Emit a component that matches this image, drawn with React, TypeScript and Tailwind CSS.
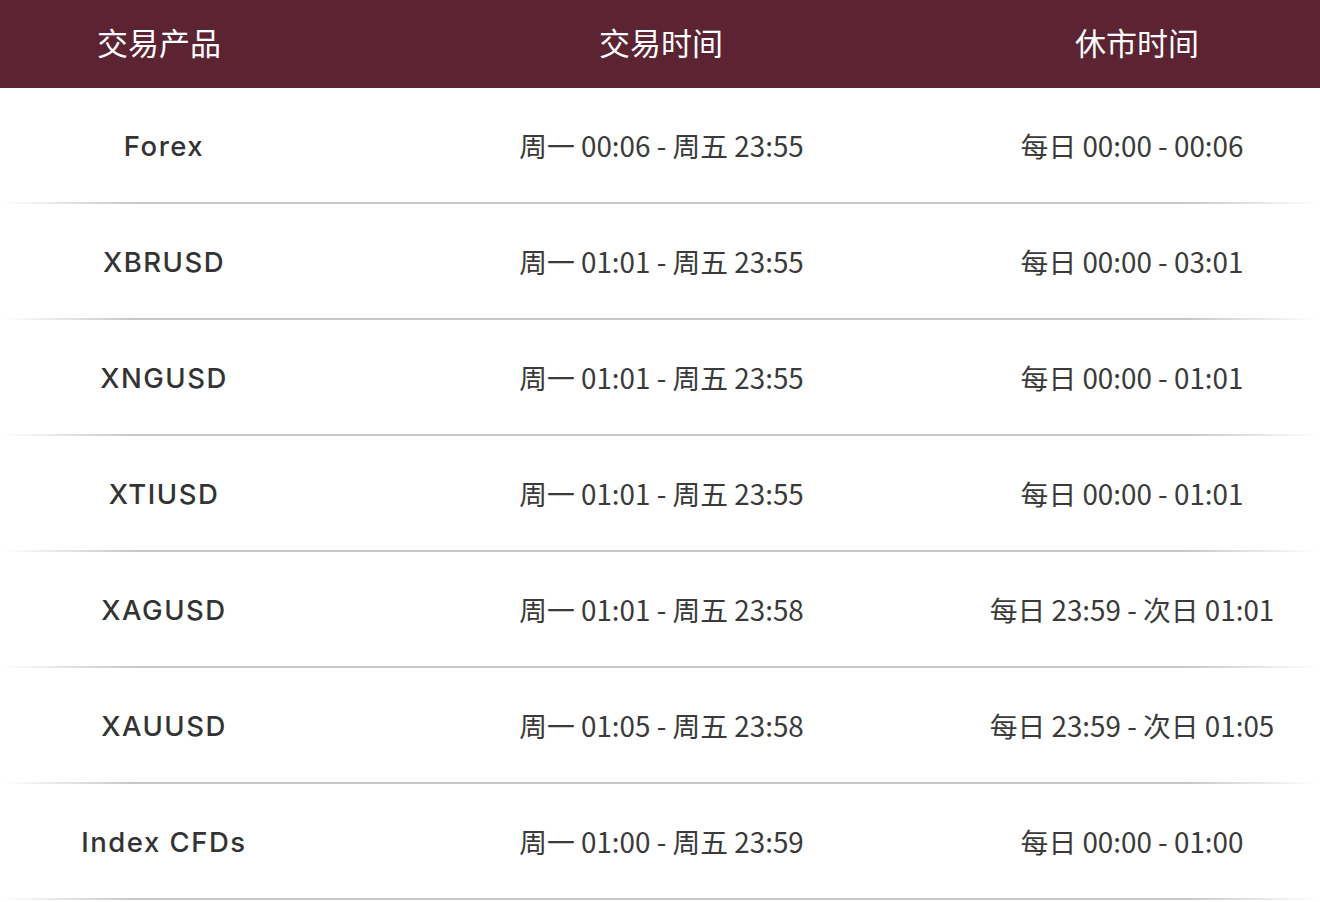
import React from "react";

const rows: [string, string, string][] = [
  ["Forex", "周一 00:06 - 周五 23:55", "每日 00:00 - 00:06"],
  ["XBRUSD", "周一 01:01 - 周五 23:55", "每日 00:00 - 03:01"],
  ["XNGUSD", "周一 01:01 - 周五 23:55", "每日 00:00 - 01:01"],
  ["XTIUSD", "周一 01:01 - 周五 23:55", "每日 00:00 - 01:01"],
  ["XAGUSD", "周一 01:01 - 周五 23:58", "每日 23:59 - 次日 01:01"],
  ["XAUUSD", "周一 01:05 - 周五 23:58", "每日 23:59 - 次日 01:05"],
  ["Index CFDs", "周一 01:00 - 周五 23:59", "每日 00:00 - 01:00"],
];

const cjk = "font-['Noto_Sans_CJK_SC','Noto_Sans',sans-serif]";

export default function App() {
  return (
    <div className="w-[1320px] h-[902px] bg-white">
      <div className={`grid grid-cols-[326px_618px_1fr] h-[88px] bg-[#5c2332] text-white text-[31px] font-normal ${cjk}`}>
        <div className="flex items-center justify-center pr-[8px] pb-[4px]">交易产品</div>
        <div className="flex items-center justify-center pl-[52px] pb-[4px]">交易时间</div>
        <div className="flex items-center justify-center pl-[10px] pb-[4px]">休市时间</div>
      </div>
      {rows.map((r) => (
        <div key={r[0]} className="flex flex-col h-[116px]">
          <div className="grid grid-cols-[326px_618px_1fr] flex-1">
            <div className="flex items-center justify-center pt-[4px] pl-[2px] font-['Inter',sans-serif] font-medium text-[27.5px] tracking-[0.055em] text-[#333333]">
              {r[0]}
            </div>
            <div className={`flex items-center justify-center pl-[53px] pt-[1px] text-[27.8px] text-[#3a3a3a] whitespace-nowrap ${cjk}`}>
              {r[1]}
            </div>
            <div className={`flex items-center justify-center pt-[1px] text-[27.8px] text-[#3a3a3a] whitespace-nowrap ${cjk}`}>
              {r[2]}
            </div>
          </div>
          <div className="h-[2px] bg-[linear-gradient(to_right,rgba(200,200,200,0)_0%,#c8c8c8_10%,#c8c8c8_90%,rgba(200,200,200,0)_100%)]" />
        </div>
      ))}
    </div>
  );
}
